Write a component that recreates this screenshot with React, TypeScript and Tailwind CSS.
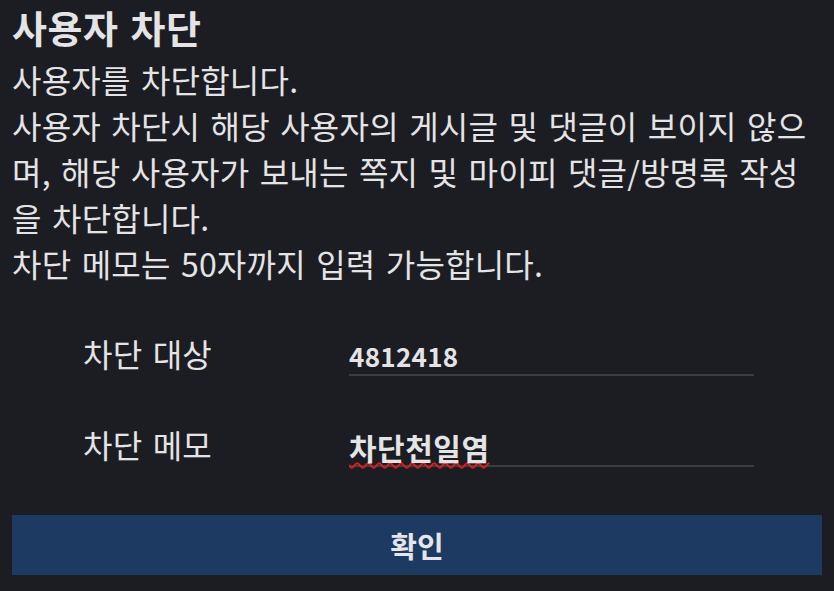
export default function App() {
  return (
    <div
      className="w-[834px] h-[591px] bg-[#1b1d22] text-[#e4e4e6] overflow-hidden flex flex-col"
      style={{ fontFamily: '"Noto Sans CJK KR", "Noto Sans", sans-serif' }}
    >
      <div className="pl-[12px] pt-[4px] w-[812px]">
        <h1 className="text-[38px] font-bold leading-[46px] tracking-[0.5px] [word-spacing:3px]">사용자 차단</h1>
        <div className="mt-[6px] text-[32px] leading-[46px] tracking-[0.2px] [word-spacing:3px] break-all">
          <p>사용자를 차단합니다.</p>
          <p>사용자 차단시 해당 사용자의 게시글 및 댓글이 보이지 않으며, 해당 사용자가 보내는 쪽지 및 마이피 댓글/방명록 작성을 차단합니다.</p>
          <p>차단 메모는 50자까지 입력 가능합니다.</p>
        </div>
      </div>
      <div className="pl-[83px] mt-[44px] flex flex-col gap-[45px]">
        <div className="flex h-[46px]">
          <div className="w-[266px] text-[32px] leading-[46px] tracking-[0.2px] [word-spacing:3px]">차단 대상</div>
          <div className="w-[405px] border-b-2 border-[#3a3d42] text-[26px] font-bold leading-[44px] pt-[4px] tracking-[0.3px]">4812418</div>
        </div>
        <div className="flex h-[46px]">
          <div className="w-[266px] text-[32px] leading-[46px] tracking-[0.2px] [word-spacing:3px]">차단 메모</div>
          <div className="w-[405px] border-b-2 border-[#3a3d42] text-[30px] font-bold leading-[44px] pt-[4px] tracking-[0.5px]">
            <span className="underline decoration-wavy decoration-[#e01b1b] decoration-[1.5px] underline-offset-[2px]">차단천일염</span>
          </div>
        </div>
      </div>
      <div className="px-[12px] mt-auto mb-[16px]">
        <button className="w-full h-[60px] bg-[#1c3a62] text-[#e4e6ea] text-[29px] font-bold leading-[60px]">확인</button>
      </div>
    </div>
  );
}
